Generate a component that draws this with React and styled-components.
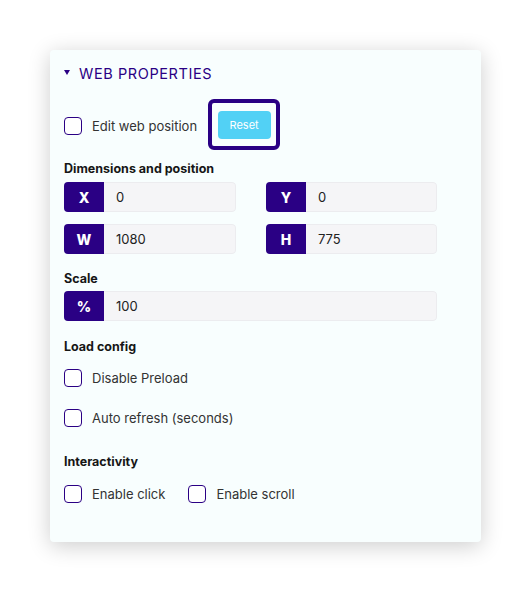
import React from 'react';
import styled, { createGlobalStyle } from 'styled-components';

const purple = '#2a0084';

const Global = createGlobalStyle`
  html, body {
    margin: 0;
    padding: 0;
    background: #ffffff;
  }
  body {
    font-family: Inter, "Noto Sans", sans-serif;
  }
`;

const Page = styled.div`
  padding: 50px 0 0 50px;
  height: 592px;
  box-sizing: border-box;
`;

const Card = styled.div`
  width: 431px;
  height: 492px;
  box-sizing: border-box;
  padding: 13px 14px 0 14px;
  background: #f8fefe;
  border-radius: 4px;
  box-shadow: 0 4px 22px rgba(0, 0, 0, 0.2);
`;

const Header = styled.div`
  display: flex;
  align-items: center;
  height: 20px;
  gap: 9px;
  color: ${purple};
  font-size: 14.5px;
  letter-spacing: 0.6px;
  text-transform: uppercase;
`;

const Caret = styled.span`
  width: 0;
  height: 0;
  border-left: 3.5px solid transparent;
  border-right: 3.5px solid transparent;
  border-top: 5px solid ${purple};
  margin-top: -2px;
`;

const Row = styled.div`
  display: flex;
  align-items: center;
  margin-top: ${p => p.$top || 0}px;
  gap: ${p => p.$gap || 0}px;
`;

const Check = styled.label`
  display: flex;
  align-items: center;
  gap: 10px;
  font-size: 13px;
  color: #333333;
  height: 18px;
`;

const Box = styled.span`
  width: 18px;
  height: 18px;
  box-sizing: border-box;
  border: 1.5px solid ${purple};
  border-radius: 4px;
  background: #ffffff;
`;

const FocusRing = styled.div`
  width: 72px;
  height: 51px;
  box-sizing: border-box;
  border: 4px solid ${purple};
  border-radius: 6px;
  display: flex;
  align-items: center;
  justify-content: center;
  margin-left: 11px;
  margin-top: -2px;
`;

const ResetButton = styled.button`
  width: 53px;
  height: 28px;
  border: none;
  border-radius: 4px;
  background: #52d1f5;
  color: #ffffff;
  font-family: inherit;
  font-size: 11px;
  padding: 0;
`;

const Title = styled.div`
  margin-top: ${p => p.$top}px;
  height: 16px;
  line-height: 16px;
  font-size: 12.5px;
  font-weight: 700;
  color: #161616;
`;

const Grid = styled.div`
  display: grid;
  grid-template-columns: 172px 171px;
  column-gap: 30px;
  row-gap: 12px;
  margin-top: 5px;
`;

const Field = styled.div`
  display: flex;
  height: 30px;
  width: ${p => p.$wide ? '373px' : 'auto'};
  margin-top: ${p => p.$top || 0}px;
  border-radius: 4px;
  overflow: hidden;
`;

const Tag = styled.div`
  width: 40px;
  flex: none;
  background: ${purple};
  color: #ffffff;
  font-weight: 800;
  font-size: 14px;
  display: flex;
  align-items: center;
  justify-content: center;
`;

const Value = styled.div`
  flex: 1;
  background: #f5f5f7;
  border: 1px solid #ececef;
  border-left: none;
  border-radius: 0 4px 4px 0;
  display: flex;
  align-items: center;
  padding-left: 12px;
  font-size: 13px;
  color: #222222;
`;

const Column = styled.div`
  display: flex;
  flex-direction: column;
  margin-top: ${p => p.$top}px;
  gap: ${p => p.$gap}px;
`;

function Checkbox({ label }) {
  return (
    <Check>
      <Box />
      {label}
    </Check>
  );
}

function Input({ tag, value, wide, top }) {
  return (
    <Field $wide={wide} $top={top}>
      <Tag>{tag}</Tag>
      <Value>{value}</Value>
    </Field>
  );
}

export default function App() {
  return (
    <Page>
      <Global />
      <Card>
        <Header>
          <Caret />
          Web properties
        </Header>

        <Row $top={18}>
          <Checkbox label="Edit web position" />
          <FocusRing>
            <ResetButton>Reset</ResetButton>
          </FocusRing>
        </Row>

        <Title $top={11}>Dimensions and position</Title>
        <Grid>
          <Input tag="X" value="0" />
          <Input tag="Y" value="0" />
          <Input tag="W" value="1080" />
          <Input tag="H" value="775" />
        </Grid>

        <Title $top={17}>Scale</Title>
        <Input tag="%" value="100" wide top={4} />

        <Title $top={18}>Load config</Title>
        <Column $top={14} $gap={22}>
          <Checkbox label="Disable Preload" />
          <Checkbox label="Auto refresh (seconds)" />
        </Column>

        <Title $top={27}>Interactivity</Title>
        <Row $top={15} $gap={23}>
          <Checkbox label="Enable click" />
          <Checkbox label="Enable scroll" />
        </Row>
      </Card>
    </Page>
  );
}
